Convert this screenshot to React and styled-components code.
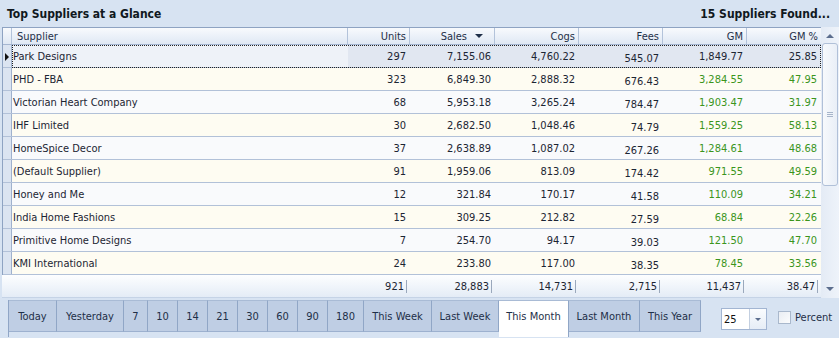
import React from 'react'
import styled, { createGlobalStyle } from 'styled-components'

const GlobalStyle = createGlobalStyle`
body {
  margin:0;
  background:#d7e3f2;
  font-family:"DejaVu Sans Condensed","DejaVu Sans",sans-serif;
  font-size:11px;
  overflow:hidden;
}
`;

const COLS = '9px 336px 62px 85px 84px 84px 84px 74px';

const Page = styled.div`
width:839px;
display:flex;
flex-direction:column;
& > * { flex-shrink:0; }
`;

const TitleBar = styled.div`
height:27px;
display:flex;
align-items:center;
justify-content:space-between;
padding:1px 9px 0 7px;
box-sizing:border-box;
font-weight:bold;
font-size:12px;
color:#101820;
`;

const Grid = styled.div`
display:flex;
margin-left:2px;
`;

const TableCol = styled.div`
width:819px;
display:flex;
flex-direction:column;
`;

const Frame = styled.div`
border-left:1px solid #8ea3c2;
border-top:1px solid #8ea3c2;
`;

const HeaderRow = styled.div`
display:grid;
grid-template-columns:${COLS};
height:16px;
background:linear-gradient(#f8fafd,#dfe8f4);
border-bottom:1px solid #a5b6d1;
color:#1e2f48;
`;

const HeadCell = styled.div`
display:flex;
align-items:center;
justify-content:${p => p.$left ? 'flex-start' : 'flex-end'};
gap:6px;
padding:${p => p.$left ? '0 0 0 5px' : '0 3px 0 0'};
border-right:1px solid #b3c3da;
&:last-child{ border-right:none; }
`;

const SortArrow = styled.span`
width:0;
height:0;
border-left:4px solid transparent;
border-right:4px solid transparent;
border-top:4px solid #1e2f48;
margin:0 8px 0 2px;
`;

const Row = styled.div`
display:grid;
grid-template-columns:${COLS};
height:22px;
border-bottom:1px solid #b2c1d8;
background:${p => p.$alt ? '#f9fafc' : '#fefcf2'};
color:#1c2533;
position:relative;
`;

const Focus = styled.div`
position:absolute;
left:9px;
right:0;
top:0;
bottom:-1px;
border:1px dotted #222;
pointer-events:none;
`;

const Indicator = styled.div`
background:#dbe4f1;
border-right:1px solid #9fb1cd;
display:flex;
align-items:center;
padding-left:2px;
`;

const Pointer = styled.span`
width:0;
height:0;
border-top:4px solid transparent;
border-bottom:4px solid transparent;
border-left:4px solid #111;
margin-top:2px;
`;

const Cell = styled.div`
display:flex;
align-items:center;
justify-content:${p => p.$left ? 'flex-start' : 'flex-end'};
padding:${p => p.$left ? '0 0 0 1px' : '0 4px 0 0'};
padding-top:${p => p.$low ? '4px' : '0'};
color:${p => p.$green ? '#3b951c' : 'inherit'};
background:${p => p.$sel ? (p.$focus ? '#eef2f8' : '#e1e7f1') : 'transparent'};
white-space:nowrap;
`;

const Footer = styled.div`
display:grid;
grid-template-columns:${COLS};
height:22px;
background:linear-gradient(#fdfeff,#e4ecf6);
border-bottom:1px solid #c5d3e6;
color:#1c2533;
`;

const Total = styled.div`
display:flex;
align-items:center;
justify-content:flex-end;
padding-right:2px;
`;

const Bar = styled.span`
display:inline-block;
width:1px;
height:13px;
background:#9aa8bc;
margin-left:2px;
`;

const ScrollBar = styled.div`
width:18px;
display:flex;
flex-direction:column;
align-items:center;
background:linear-gradient(90deg,#e4ebf5,#eef3fa);
`;

const Arrow = styled.span`
width:0;
height:0;
border-left:4px solid transparent;
border-right:4px solid transparent;
${p => p.$up ? 'border-bottom:4px solid #5c6e8e;' : 'border-top:4px solid #5c6e8e;'}
margin:${p => p.$up ? '7px 0 5px' : '8px 0 7px'};
`;

const Track = styled.div`
flex:1;
width:100%;
display:flex;
flex-direction:column;
align-items:center;
`;

const Thumb = styled.div`
width:14px;
height:141px;
margin-left:-1px;
border:1px solid #b0c0d8;
border-radius:3px;
background:linear-gradient(90deg,#f7f9fc,#e9eff7);
display:flex;
flex-direction:column;
align-items:center;
justify-content:center;
gap:1px;
`;

const GripLine = styled.span`
width:6px;
height:1px;
background:#a7b5ca;
`;

const Bottom = styled.div`
display:flex;
align-items:flex-start;
padding-left:8px;
`;

const Tabs = styled.div`
display:flex;
margin-top:2px;
border-left:1px solid #90a6c6;
`;

const Tab = styled.div`
width:${p => p.$w}px;
box-sizing:border-box;
height:${p => p.$active ? '37px' : '32px'};
display:flex;
align-items:center;
justify-content:center;
padding-bottom:${p => p.$active ? '5px' : '0'};
background:${p => p.$active ? '#ffffff' : '#bfcee4'};
border-right:1px solid #90a6c6;
border-bottom:${p => p.$active ? 'none' : '1px solid #9db1cf'};
border-top:1px solid #a9bbd5;
color:#1e2f48;
white-space:nowrap;
`;

const Combo = styled.div`
display:flex;
margin:10px 0 0 20px;
height:20px;
border:1px solid #a2b5d2;
background:#fff;
`;

const ComboText = styled.div`
width:25px;
padding-left:2px;
display:flex;
align-items:center;
color:#111;
`;

const ComboButton = styled.div`
width:16px;
border-left:1px solid #c3cfe0;
background:linear-gradient(#fafcfe,#e6edf6);
display:flex;
align-items:center;
justify-content:center;
`;

const SmallDown = styled.span`
width:0;
height:0;
border-left:3px solid transparent;
border-right:3px solid transparent;
border-top:3px solid #5c6e8e;
`;

const Check = styled.label`
display:flex;
align-items:center;
gap:4px;
margin:13px 0 0 11px;
color:#1e2f48;
white-space:nowrap;
`;

const Box = styled.span`
width:11px;
height:11px;
border:1px solid #a9b8cc;
background:linear-gradient(135deg,#e9edf3,#fbfcfd);
`;

const rows = [
  ['Park Designs', '297', '7,155.06', '4,760.22', '545.07', '1,849.77', '25.85'],
  ['PHD - FBA', '323', '6,849.30', '2,888.32', '676.43', '3,284.55', '47.95'],
  ['Victorian Heart Company', '68', '5,953.18', '3,265.24', '784.47', '1,903.47', '31.97'],
  ['IHF Limited', '30', '2,682.50', '1,048.46', '74.79', '1,559.25', '58.13'],
  ['HomeSpice Decor', '37', '2,638.89', '1,087.02', '267.26', '1,284.61', '48.68'],
  ['(Default Supplier)', '91', '1,959.06', '813.09', '174.42', '971.55', '49.59'],
  ['Honey and Me', '12', '321.84', '170.17', '41.58', '110.09', '34.21'],
  ['India Home Fashions', '15', '309.25', '212.82', '27.59', '68.84', '22.26'],
  ['Primitive Home Designs', '7', '254.70', '94.17', '39.03', '121.50', '47.70'],
  ['KMI International', '24', '233.80', '117.00', '38.35', '78.45', '33.56'],
];

const totals = ['921', '28,883', '14,731', '2,715', '11,437', '38.47'];

const tabs = [
  ['Today', 48], ['Yesterday', 67], ['7', 24], ['10', 30], ['14', 30], ['21', 30],
  ['30', 30], ['60', 30], ['90', 30], ['180', 36], ['This Week', 68], ['Last Week', 67],
  ['This Month', 70], ['Last Month', 71], ['This Year', 61],
];

const App = () => {
  return (
    <Page>
      <GlobalStyle />
      <TitleBar>
        <span>Top Suppliers at a Glance</span>
        <span>15 Suppliers Found...</span>
      </TitleBar>
      <Grid>
        <TableCol>
          <Frame>
            <HeaderRow>
              <HeadCell />
              <HeadCell $left>Supplier</HeadCell>
              <HeadCell>Units</HeadCell>
              <HeadCell>Sales<SortArrow /></HeadCell>
              <HeadCell>Cogs</HeadCell>
              <HeadCell>Fees</HeadCell>
              <HeadCell>GM</HeadCell>
              <HeadCell>GM %</HeadCell>
            </HeaderRow>
            {rows.map((r, i) => {
              const sel = i === 0
              return (
                <Row key={r[0]} $alt={i % 2 === 0 && i > 0}>
                  <Indicator>{sel && <Pointer />}</Indicator>
                  <Cell $left $sel={sel} $focus>{r[0]}</Cell>
                  <Cell $sel={sel}>{r[1]}</Cell>
                  <Cell $sel={sel}>{r[2]}</Cell>
                  <Cell $sel={sel}>{r[3]}</Cell>
                  <Cell $sel={sel} $low>{r[4]}</Cell>
                  <Cell $sel={sel} $green={!sel}>{r[5]}</Cell>
                  <Cell $sel={sel} $green={!sel}>{r[6]}</Cell>
                  {sel && <Focus />}
                </Row>
              )
            })}
          </Frame>
          <Footer>
            <div />
            <div />
            {totals.map(t => (
              <Total key={t}>{t}<Bar /></Total>
            ))}
          </Footer>
        </TableCol>
        <ScrollBar>
          <Arrow $up />
          <Track>
            <Thumb>
              <GripLine />
              <GripLine />
              <GripLine />
            </Thumb>
          </Track>
          <Arrow />
        </ScrollBar>
      </Grid>
      <Bottom>
        <Tabs>
          {tabs.map(([t, w]) => (
            <Tab key={t} $w={w} $active={t === 'This Month'}>{t}</Tab>
          ))}
        </Tabs>
        <Combo>
          <ComboText>25</ComboText>
          <ComboButton><SmallDown /></ComboButton>
        </Combo>
        <Check>
          <Box />
          Percent
        </Check>
      </Bottom>
    </Page>
  )
}

export default App
